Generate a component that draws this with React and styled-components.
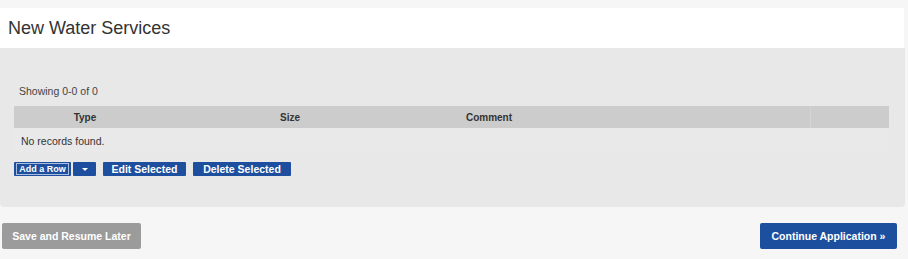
import React from "react";
import styled, { createGlobalStyle } from "styled-components";

const GlobalStyle = createGlobalStyle`
  body {
    margin: 0;
    background: #f6f6f6;
    font-family: "Liberation Sans", Arial, sans-serif;
  }
`;

const Page = styled.div`
  width: 908px;
  height: 259px;
  padding-top: 8px;
  box-sizing: border-box;
  background: #f6f6f6;
`;

const Header = styled.div`
  width: 904px;
  height: 40px;
  background: #ffffff;
  display: flex;
  align-items: center;
  padding-left: 8px;
  box-sizing: border-box;
`;

const Title = styled.h1`
  margin: 0;
  font-size: 18px;
  font-weight: normal;
  color: #333333;
`;

const Panel = styled.div`
  width: 905px;
  height: 159px;
  background: #e8e8e8;
  border-radius: 0 0 4px 4px;
  padding: 37px 0 0 14px;
  box-sizing: border-box;
`;

const Showing = styled.div`
  font-size: 10.5px;
  color: #444444;
  padding-left: 5px;
  height: 21px;
`;

const Table = styled.div`
  width: 875px;
`;

const Row = styled.div`
  display: grid;
  grid-template-columns: 142px 268px 130px 256px 1fr;
  height: ${props => (props.head ? "22px" : "25px")};
  align-items: center;
  background: ${props => (props.head ? "#cccccc" : "#e9e9e9")};
`;

const HeadCell = styled.div`
  font-size: 10px;
  font-weight: bold;
  color: #333333;
  height: 100%;
  display: flex;
  align-items: center;
  justify-content: center;
  border-left: ${props => (props.divider ? "1px solid #d4d4d4" : "none")};
`;

const Empty = styled.div`
  grid-column: 1 / -1;
  font-size: 10.5px;
  color: #333333;
  padding-left: 7px;
`;

const Actions = styled.div`
  display: flex;
  gap: 7px;
  margin-top: 9px;
`;

const Split = styled.div`
  display: flex;
  gap: 2px;
`;

const SmallButton = styled.button`
  height: 14px;
  padding: 0 ${props => props.pad || 8}px;
  border: none;
  border-radius: 1px;
  background: #1e4f9e;
  color: #ffffff;
  font-family: "Liberation Sans", Arial, sans-serif;
  font-size: 10.5px;
  font-weight: bold;
  display: flex;
  align-items: center;
  justify-content: center;
  cursor: pointer;
  box-sizing: border-box;
  width: ${props => props.w}px;
`;

const Outlined = styled.span`
  border: 1px solid #a9bde0;
  padding: 0 2px;
  line-height: 10px;
  font-size: 9px;
`;

const Caret = styled.span`
  width: 0;
  height: 0;
  border-left: 3px solid transparent;
  border-right: 3px solid transparent;
  border-top: 3px solid #ffffff;
`;

const Footer = styled.div`
  display: flex;
  justify-content: space-between;
  align-items: center;
  padding: 16px 11px 0 2px;
`;

const BigButton = styled.button`
  height: 26px;
  width: ${props => props.w}px;
  border: none;
  border-radius: 2px;
  background: ${props => (props.primary ? "#1d4f9f" : "#9b9b9b")};
  color: #ffffff;
  font-family: "Liberation Sans", Arial, sans-serif;
  font-size: 10.5px;
  font-weight: bold;
  cursor: pointer;
`;

export default function App() {
  return (
    <>
      <GlobalStyle />
      <Page>
        <Header>
          <Title>New Water Services</Title>
        </Header>
        <Panel>
          <Showing>Showing 0-0 of 0</Showing>
          <Table>
            <Row head>
              <HeadCell>Type</HeadCell>
              <HeadCell>Size</HeadCell>
              <HeadCell>Comment</HeadCell>
              <HeadCell />
              <HeadCell divider />
            </Row>
            <Row>
              <Empty>No records found.</Empty>
            </Row>
          </Table>
          <Actions>
            <Split>
              <SmallButton w={57} pad={2}>
                <Outlined>Add a Row</Outlined>
              </SmallButton>
              <SmallButton w={23}>
                <Caret />
              </SmallButton>
            </Split>
            <SmallButton w={83}>Edit Selected</SmallButton>
            <SmallButton w={98}>Delete Selected</SmallButton>
          </Actions>
        </Panel>
        <Footer>
          <BigButton w={139}>Save and Resume Later</BigButton>
          <BigButton primary w={137}>
            Continue Application »
          </BigButton>
        </Footer>
      </Page>
    </>
  );
}
